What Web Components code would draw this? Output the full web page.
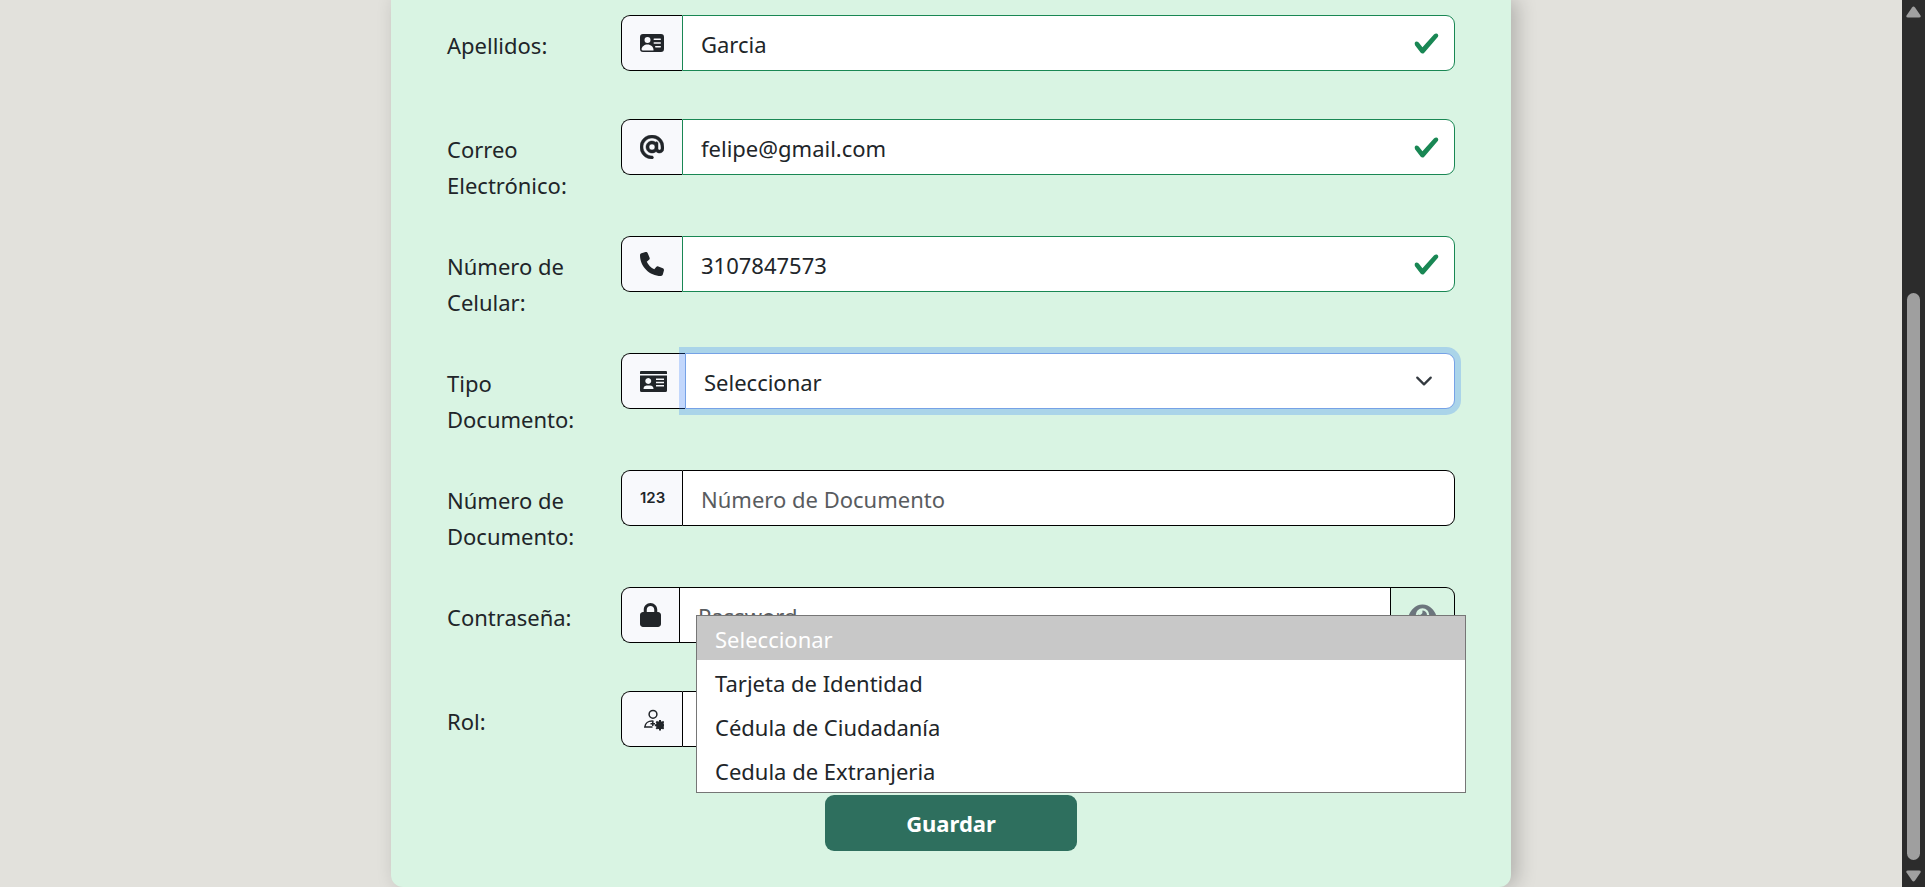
<!DOCTYPE html>
<html lang="es">
<head>
<meta charset="utf-8">
<meta name="viewport" content="width=device-width, initial-scale=1">
<title>Registro de usuario</title>
<style>
  body {
    margin: 0;
    background: #e2e1dc;
    color: #212529;
    font: 22px/36px "Noto Sans", "Open Sans", sans-serif;
  }
</style>
</head>
<body>
<user-page>
  <form-card>
    <form-field label="Apellidos:" kind="text" value="Garcia" valid icon="vcard"></form-field>
    <form-field label="Correo Electrónico:" kind="email" value="felipe@gmail.com" valid icon="at"></form-field>
    <form-field label="Número de Celular:" kind="tel" value="3107847573" valid icon="phone"></form-field>
    <form-field label="Tipo Documento:" kind="select" options="Seleccionar|Tarjeta de Identidad|Cédula de Ciudadanía|Cedula de Extranjeria" icon="idcard" open></form-field>
    <form-field label="Número de Documento:" kind="text" placeholder="Número de Documento" icon="digits"></form-field>
    <form-field label="Contraseña:" kind="password" placeholder="Password" icon="lock"></form-field>
    <form-field label="Rol:" kind="select" options="Seleccionar" icon="role"></form-field>
    <save-button slot="actions">Guardar</save-button>
  </form-card>
</user-page>

<script>
const ICONS = {
  vcard: [24, '0 0 16 16', '<path d="M0 4a2 2 0 0 1 2-2h12a2 2 0 0 1 2 2v8a2 2 0 0 1-2 2H2a2 2 0 0 1-2-2zm9 1.5a.5.5 0 0 0 .5.5h4a.5.5 0 0 0 0-1h-4a.5.5 0 0 0-.5.5M9 8a.5.5 0 0 0 .5.5h4a.5.5 0 0 0 0-1h-4A.5.5 0 0 0 9 8m1 2.5a.5.5 0 0 0 .5.5h3a.5.5 0 0 0 0-1h-3a.5.5 0 0 0-.5.5m-1 2C9 10.567 7.21 9 5 9c-2.086 0-3.8 1.398-3.984 3.181A1 1 0 0 0 2 13h6.96q.04-.245.04-.5M7 6a2 2 0 1 0-4 0 2 2 0 0 0 4 0"/>'],
  at: [24, '0 0 512 512', '<path stroke="currentColor" stroke-width="10" d="M256 64C150 64 64 150 64 256s86 192 192 192c17.7 0 32 14.3 32 32s-14.3 32-32 32C114.6 512 0 397.4 0 256S114.6 0 256 0S512 114.6 512 256v32c0 53-43 96-96 96c-29.3 0-55.6-13.2-73.2-33.9C320 371.1 289.5 384 256 384c-70.7 0-128-57.3-128-128s57.3-128 128-128c27.9 0 53.7 8.9 74.7 24.1c5.7-5 13.1-8.1 21.3-8.1c17.7 0 32 14.3 32 32v80 32c0 17.7 14.3 32 32 32s32-14.3 32-32V256c0-106-86-192-192-192zm64 192a64 64 0 1 0 -128 0 64 64 0 1 0 128 0z"/>'],
  phone: [24, '0 0 512 512', '<path d="M164.9 24.6c-7.7-18.6-28-28.5-47.4-23.2l-88 24C12.1 30.2 0 46 0 64C0 311.4 200.6 512 448 512c18 0 33.8-12.1 38.6-29.5l24-88c5.3-19.4-4.6-39.7-23.2-47.4l-96-40c-16.3-6.8-35.2-2.1-46.3 11.6L304.7 368C234.3 334.7 177.3 277.7 144 207.3L193.3 167c13.7-11.2 18.4-30 11.6-46.3l-40-96z"/>'],
  idcard: [27, '0 0 27 24', '<path fill-rule="evenodd" d="M1 2h25a1 1 0 0 1 1 1v2H0V3a1 1 0 0 1 1-1zM0 6.5h27V21.5a1.5 1.5 0 0 1-1.5 1.5h-24A1.5 1.5 0 0 1 0 21.5zM8.25 9a3 3 0 1 0 .01 0zM3.5 20a3.500 3.500 0 0 1 3-3.500h3.500a3.500 3.500 0 0 1 3.500 3.500zM16 9.500h8v1.500h-8zM16 12.800h8v1.500h-8zM16 16h8v1.500h-8z"/>'],
  lock: [21, '0 0 448 512', '<path d="M144 144v48H304V144c0-44.200-35.800-80-80-80s-80 35.800-80 80zM80 192V144C80 64.500 144.500 0 224 0s144 64.500 144 144v48h16c35.300 0 64 28.700 64 64V448c0 35.300-28.700 64-64 64H64c-35.300 0-64-28.700-64-64V256c0-35.300 28.700-64 64-64H80z"/>'],
  role: [24, '-1 -1 24 24', '<g fill="none" stroke="currentColor" stroke-width="1.500"><circle cx="12" cy="6.300" r="3.900"/><path d="M12.500 13.200C7 12.600 4.200 15.500 3.800 19h7.700"/><path d="M9.500 15.800h4.500M11.800 13.500v4.500" /></g><circle cx="19" cy="17.200" r="3.900"/><g stroke="currentColor" stroke-width="2"><path d="M19 12v10.400M13.800 17.200h10.400M15.300 13.500l7.400 7.400M22.700 13.500l-7.400 7.400"/></g>'],
  eye: [27, '0 0 576 512', '<path fill-rule="evenodd" d="M288 32c-80.800 0-145.500 36.800-192.600 80.600C48.600 156 17.300 208 2.500 243.700c-3.300 7.900-3.300 16.700 0 24.600C17.300 304 48.600 356 95.400 399.400C142.500 443.200 207.200 480 288 480s145.500-36.800 192.600-80.600c46.800-43.500 78.100-95.400 93-131.100c3.300-7.900 3.300-16.700 0-24.600c-14.900-35.700-46.200-87.700-93-131.100C433.500 68.800 368.800 32 288 32zM144 256a144 144 0 1 1 288 0 144 144 0 1 1-288 0z"/><path d="M288 192c0 35.300-28.700 64-64 64c-7.100 0-13.900-1.200-20.300-3.300c-5.500-1.800-11.900 1.600-11.700 7.400c.3 6.900 1.300 13.800 3.200 20.700c13.700 51.200 66.400 81.600 117.600 67.900s81.600-66.400 67.900-117.600c-11.100-41.500-47.800-69.400-88.600-71.100c-5.800-.2-9.200 6.100-7.400 11.700c2.100 6.400 3.300 13.200 3.300 20.300z"/>']
};

function icon(name) {
  if (name === 'digits') return '<span class="digits">123</span>';
  const [width, box, body] = ICONS[name];
  return `<svg width="${width}" height="24" viewBox="${box}" fill="currentColor" aria-hidden="true">${body}</svg>`;
}

customElements.define('user-page', class extends HTMLElement {
  constructor() {
    super();
    this.attachShadow({ mode: 'open' }).innerHTML = `
      <style>
        :host { display: grid; grid-template-columns: minmax(0, 1fr) 23px; height: 100vh; overflow: hidden; }
        main { display: flex; justify-content: center; align-items: flex-start; }
      </style>
      <main><slot></slot></main>
      <page-scrollbar></page-scrollbar>`;
  }
});

customElements.define('page-scrollbar', class extends HTMLElement {
  constructor() {
    super();
    this.attachShadow({ mode: 'open' }).innerHTML = `
      <style>
        :host { display: flex; flex-direction: column; align-items: center; box-sizing: border-box; padding: 6px 0 5px; background: #2c2c2c; }
        svg { display: block; flex: none; fill: #a0a0a0; }
        .track { flex: 1; display: grid; grid-template-rows: 275fr 567fr; width: 13px; margin-bottom: 10px; }
        .thumb { grid-row: 2; border-radius: 7px; background: #9f9f9f; }
      </style>
      <svg width="15" height="12" viewBox="0 0 15 12"><path d="M6 1.500q1.500-2 3 0l5.500 8q.8 2-1.500 2H2q-2.300 0-1.500-2z"/></svg>
      <div class="track"><div class="thumb"></div></div>
      <svg width="15" height="12" viewBox="0 0 15 12"><path d="M6 10.500q1.500 2 3 0l5.500-8q.8-2-1.500-2H2q-2.300 0-1.500 2z"/></svg>`;
  }
});

customElements.define('form-card', class extends HTMLElement {
  constructor() {
    super();
    this.attachShadow({ mode: 'open' }).innerHTML = `
      <style>
        :host { display: block; box-sizing: border-box; width: 100%; max-width: 1120px; padding: 15px 56px 36px;
          background: #d9f4e3; border-radius: 0 0 12px 12px; box-shadow: 6px 0 20px rgba(0, 0, 0, .22); }
        form { display: grid; gap: 33px; }
        .actions { display: flex; justify-content: center; }
      </style>
      <form>
        <slot></slot>
        <div class="actions"><slot name="actions"></slot></div>
      </form>`;
  }
});

customElements.define('save-button', class extends HTMLElement {
  constructor() {
    super();
    this.attachShadow({ mode: 'open' }).innerHTML = `
      <style>
        :host { display: block; }
        button { display: block; width: 252px; height: 56px; border: 0; border-radius: 9px; background: #2e6f5e;
          color: #fff; font: inherit; font-weight: 700; cursor: pointer; }
      </style>
      <button type="button"><slot></slot></button>`;
  }
});

customElements.define('option-list', class extends HTMLElement {
  connectedCallback() {
    const items = this.getAttribute('options').split('|');
    this.attachShadow({ mode: 'open' }).innerHTML = `
      <style>
        :host { display: block; box-sizing: border-box; border: 1px solid #767676; background: #fff; }
        ul { margin: 0; padding: 0; list-style: none; }
        li { padding: 5px 18px 3px; }
        li[aria-selected="true"] { background: #c8c8c8; color: #fff; }
      </style>
      <ul role="listbox">${items.map((t, i) => `<li role="option" aria-selected="${i === 0}">${t}</li>`).join('')}</ul>`;
  }
});

customElements.define('form-field', class extends HTMLElement {
  connectedCallback() {
    const get = name => this.getAttribute(name) || '';
    const kind = get('kind');
    const options = get('options').split('|');
    const control = kind === 'select'
      ? `<select id="control">${options.map(t => `<option>${t}</option>`).join('')}</select>`
      : `<input id="control" type="${kind}" value="${get('value')}" placeholder="${get('placeholder')}">`;
    this.attachShadow({ mode: 'open' }).innerHTML = `
      <style>
        :host { display: grid; grid-template-columns: 150px minmax(0, 1fr); column-gap: 24px; min-height: 71px; align-items: start; }
        label { padding-top: 12px; }
        .group { display: flex; height: 56px; }
        .addon, .toggle { flex: none; display: flex; align-items: center; box-sizing: border-box; border: 1px solid #000; }
        .addon { padding: 0 18px; border-right: 0; border-radius: 9px 0 0 9px; background: #f8f9fc; }
        .digits { width: 24px; font: 600 15px/24px Inter, sans-serif; text-align: center; }
        .toggle { padding: 0 18px; border-left: 0; border-radius: 0 9px 9px 0; background: transparent; color: #6c757d; }
        .control { position: relative; flex: 1; min-width: 0; display: flex; }
        input, select { flex: 1; min-width: 0; box-sizing: border-box; margin: 0; padding: 2px 18px 0; appearance: none; outline: 0;
          border: 1px solid #000; border-radius: 0 9px 9px 0; background: #fff no-repeat; color: inherit; font: inherit; }
        input::placeholder { color: #595c5f; opacity: 1; }
        input[type="password"] { border-radius: 0; }
        select { background-position: right 18px center; background-size: 24px 18px;
          background-image: url("data:image/svg+xml,%3csvg xmlns='http://www.w3.org/2000/svg' viewBox='0 0 16 16'%3e%3cpath fill='none' stroke='%23343a40' stroke-linecap='round' stroke-linejoin='round' stroke-width='2' d='m2 5 6 6 6-6'/%3e%3c/svg%3e"); }
        :host([valid]) input { border-color: #198754; background-position: right 14px center; background-size: 27px 27px;
          background-image: url("data:image/svg+xml,%3csvg xmlns='http://www.w3.org/2000/svg' viewBox='0 0 8 8'%3e%3cpath fill='%23198754' d='M2.3 6.73.6 4.53c-.4-1.04.46-1.4 1.1-.8l1.1 1.4 3.4-3.8c.6-.63 1.6-.27 1.2.7l-4 4.6c-.43.5-.8.4-1.1.1z'/%3e%3c/svg%3e"); }
        :host([open]) select { border-color: #76a2e6; box-shadow: 0 0 0 6px rgba(30, 116, 250, .25); }
        option-list { position: absolute; z-index: 1; top: 262px; left: 11px; width: 100%; }
      </style>
      <label for="control">${get('label')}</label>
      <div class="group">
        <span class="addon">${icon(get('icon'))}</span>
        <div class="control">${control}${this.hasAttribute('open') ? `<option-list options="${get('options')}"></option-list>` : ''}</div>
        ${kind === 'password' ? `<button class="toggle" type="button" aria-label="Mostrar contraseña">${icon('eye')}</button>` : ''}
      </div>`;
  }
});
</script>
</body>
</html>
